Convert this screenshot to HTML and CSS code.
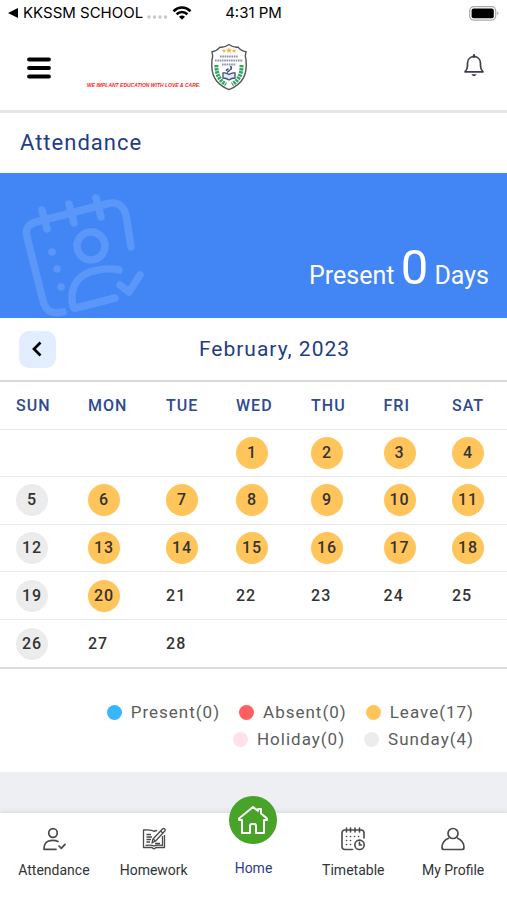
FILE: index.html
```html
<!doctype html>
<html lang="en">
<head>
  <meta charset="utf-8">
  <meta name="viewport" content="width=device-width, initial-scale=1">
  <title>Attendance</title>
  <link rel="stylesheet" href="styles.css">
</head>
<body>

	<div class="status">
		<div class="status-left">
			<svg width="11" height="10" viewBox="0 0 11 10"><path d="M0 5L10 0v10z"/></svg>
			<span class="status-app">KKSSM SCHOOL</span>
			<svg width="21" height="4" viewBox="0 0 21 4" fill="#c8c8c8"><circle cx="2" cy="2" r="1.700"/><circle cx="7.500" cy="2" r="1.700"/><circle cx="13" cy="2" r="1.700"/><circle cx="18.500" cy="2" r="1.700"/></svg>
			<svg width="20" height="14" viewBox="0 0 20 14" fill="none" stroke="#000" stroke-width="2.600"><path d="M1.500 5.200c5-4.900 12-4.900 17 0M4.600 8.300c3.200-3 7.600-3 10.800 0"/><path d="M10 13.800L7 10.800c1.700-1.600 4.300-1.600 6 0z" fill="#000" stroke="none"/></svg>
		</div>
		<div class="status-time">4:31 PM</div>
		<div class="status-right">
			<svg width="30" height="15" viewBox="0 0 30 15"><rect x=".7" y=".7" width="26" height="13.400" rx="4" fill="#fff" stroke="#aaa" stroke-width="1.200"/><rect x="2.600" y="2.600" width="22.200" height="9.600" rx="2" /><path d="M28.300 5.300q2 2 0 4z" fill="#999"/></svg>
		</div>
	</div>

	<header class="header">
		<button class="menu-btn" type="button" aria-label="Menu">
			<svg width="24" height="22" viewBox="0 0 24 22" stroke="#000" stroke-width="3.800" stroke-linecap="round"><path d="M2 2.500h20M2 11h20M2 19.500h20"/></svg>
		</button>
		<div class="brand">
			<span class="tagline">WE IMPLANT EDUCATION WITH LOVE &amp; CARE.</span>
			<svg class="crest" width="38" height="48" viewBox="0 0 38 48">
				<path d="M19 1.500c3 2.200 6 3 9 2.600 2 2.600 4.500 4 8 4.600-1 3-.9 5 0 8 1.500 15-3 24-17 30C5 40.700.5 31.700 2 16.700c.9-3 1-5 0-8 3.500-.6 6-2 8-4.600 3 .4 6-.4 9-2.600z" fill="#fff" stroke="#555" stroke-width="1.400"/>
				<path d="M19 4.300l1 2.200h2l-1.600 1.400.5 2.100-1.900-1.200-1.900 1.200.5-2.100-1.600-1.400h2zM14 6l.8 1.300h1.300l-1 1 .2 1.300-1.300-.7-1.300.7.2-1.300-1-1h1.300zM24 6l.8 1.300h1.300l-1 1 .2 1.300-1.300-.7-1.300.7.2-1.300-1-1h1.300z" fill="#f3b33d"/>
				<path d="M10 13.500h18M5 17.500h28M12 21.500h14" stroke="#8d92ac" stroke-width="2.200" stroke-dasharray="1.600 .7"/>
				<path d="M6.500 22c-.5 9 3 15.500 9.500 19.500M31.500 22c.5 9-3 15.500-9.500 19.500" fill="none" stroke="#35a565" stroke-width="4" stroke-dasharray="2.300 .8"/>
				<path d="M13 30c2-.5 4 0 6 1.500 2-1.500 4-2 6-1.500v5c-2 0-4 .5-6 2-2-1.500-4-2-6-2z" fill="#e4ebf4" stroke="#38507a" stroke-width="1.300"/>
				<path d="M17 29.500l3-2.500M20 23.500a1.500 1.500 0 1 1-.1 3M16.500 28c0-1.500 1-2 2-2" fill="none" stroke="#38507a" stroke-width="1.500"/>
			</svg>
		</div>
		<button class="bell-btn" type="button" aria-label="Notifications">
			<svg width="20" height="23" viewBox="0 0 20 23" fill="none" stroke="#3f3f49" stroke-width="1.700" stroke-linejoin="round"><path d="M1 17.800h18c-1.800-1.700-2.500-3.200-2.500-6V9.300c0-3.900-2.700-6.600-6.500-6.600S3.500 5.400 3.500 9.300v2.500c0 2.800-.7 4.300-2.500 6z"/><path d="M10 2.700V1.200" stroke-width="2.200" stroke-linecap="round"/><path d="M7.300 20.200h5.400q-2.700 4-5.400 0z" fill="#3f3f49" stroke="none"/></svg>
		</button>
	</header>

	<main class="main">
		<h1 class="title">Attendance</h1>

		<section class="banner">
			<svg class="banner-icon" width="126" height="126" viewBox="0 0 126 126" fill="none" stroke="#5a97f9" stroke-width="7.500" stroke-linecap="round" stroke-linejoin="round">
				<path d="M43 120c-12 2.500-17-1-20-11L7 45c-2-8 1-13 9-15l70-18c11-3 17 1 20 11l5 32"/>
				<path d="M22 18l5 19M49 12l5 19M76 6l5 19"/>
				<circle cx="71" cy="54" r="14"/>
				<path d="M99 78c-8-2-20-1-29 2-14 5-21 18-17 34q.5 3 3 2l39-10M100 93l9 7 11-17"/>
				<path d="M32 60h.1M37 77h.1M41 95h.1"/>
			</svg>
			<p class="banner-text">Present <span class="banner-count">0</span> Days</p>
		</section>

		<div class="month">
			<button class="prev" type="button" aria-label="Previous month">
				<svg width="11" height="16" viewBox="0 0 11 16" fill="none" stroke="#000" stroke-width="2.700"><path d="M8.500 1.500L2 8l6.500 6.500"/></svg>
			</button>
			<h2 class="month-name">February, 2023</h2>
		</div>

		<table class="calendar">
			<colgroup>
				<col class="col-sun"><col class="col-mon"><col class="col-tue"><col class="col-wed"><col class="col-thu"><col class="col-fri"><col class="col-sat">
			</colgroup>
			<thead>
				<tr><th>SUN</th><th>MON</th><th>TUE</th><th>WED</th><th>THU</th><th>FRI</th><th>SAT</th></tr>
			</thead>
			<tbody>
				<tr>
					<td></td><td></td><td></td>
					<td><span class="day leave">1</span></td>
					<td><span class="day leave">2</span></td>
					<td><span class="day leave">3</span></td>
					<td><span class="day leave">4</span></td>
				</tr>
				<tr>
					<td><span class="day sunday">5</span></td>
					<td><span class="day leave">6</span></td>
					<td><span class="day leave">7</span></td>
					<td><span class="day leave">8</span></td>
					<td><span class="day leave">9</span></td>
					<td><span class="day leave">10</span></td>
					<td><span class="day leave">11</span></td>
				</tr>
				<tr>
					<td><span class="day sunday">12</span></td>
					<td><span class="day leave">13</span></td>
					<td><span class="day leave">14</span></td>
					<td><span class="day leave">15</span></td>
					<td><span class="day leave">16</span></td>
					<td><span class="day leave">17</span></td>
					<td><span class="day leave">18</span></td>
				</tr>
				<tr>
					<td><span class="day sunday">19</span></td>
					<td><span class="day leave">20</span></td>
					<td>21</td><td>22</td><td>23</td><td>24</td><td>25</td>
				</tr>
				<tr>
					<td><span class="day sunday">26</span></td>
					<td>27</td><td>28</td><td></td><td></td><td></td><td></td>
				</tr>
			</tbody>
		</table>

		<ul class="legend">
			<li><i class="dot present"></i>Present(0)</li>
			<li><i class="dot absent"></i>Absent(0)</li>
			<li><i class="dot leave"></i>Leave(17)</li>
			<li><i class="dot holiday"></i>Holiday(0)</li>
			<li><i class="dot sunday"></i>Sunday(4)</li>
		</ul>
	</main>

	<nav class="tabs">
		<a class="tab" href="#attendance">
			<svg width="24" height="24" viewBox="0 0 24 24" fill="none" stroke="#4a4a4a" stroke-width="1.700" stroke-linecap="round" stroke-linejoin="round"><circle cx="11" cy="6" r="4.300"/><path d="M16 14.500c-2.500-1.200-7-1.300-10-.3-3 1.200-4 3.800-4 8.100h12M17 19l2.300 2.300 3.700-4"/></svg>
			Attendance
		</a>
		<a class="tab" href="#homework">
			<svg width="24" height="24" viewBox="0 0 24 24" fill="none" stroke="#4a4a4a" stroke-width="1.300" stroke-linejoin="round"><path d="M15 3.500c-1.500 0-2.300.3-3 1-1.500-1.500-5-2-10.500-1.500v17.500H10q2 2.500 4 0h8.500V8"/><path d="M3.500 18.300c4-.5 7-.3 8.500.8 1.500-1.100 4.500-1.300 8.500-.8V9M4.500 7.500H9M4.500 10H10M4.500 12.500H9M4.500 15H8M13 16.500h5"/><path d="M10 16l1-4L20.500 2c1.500-1.200 3.500.5 2.300 2L13.500 14z"/><path d="M11 12l2.500 2M18.500 4l2.500 2"/></svg>
			Homework
		</a>
		<a class="tab home" href="#home">
			<span class="home-badge">
				<svg width="32" height="30" viewBox="0 0 32 30" fill="none" stroke="#fff" stroke-width="2" stroke-linecap="round" stroke-linejoin="round"><path d="M5 15H2v-1.500L16 2l5 4V4h3v4.500l6 5V15h-3v13h-8v-7q0-2-2-2h-2q-2 0-2 2v7H5z"/></svg>
			</span>
			Home
		</a>
		<a class="tab" href="#timetable">
			<svg width="24" height="24" viewBox="0 0 24 24" fill="none" stroke="#4a4a4a" stroke-width="1.600" stroke-linecap="round"><path d="M11.500 22.500H4q-3 0-3-3V6q0-3 3-3h16q3 0 3 3v5"/><path d="M5.500 1v4M9.500 1v4M14 1v4M18.500 1v4"/><path d="M5.500 9.500h.1M9.500 9.500h.1M13.500 9.500h.1M17.500 9.500h.1M5.500 13.500h.1M9.500 13.500h.1M5.500 17.500h.1M9.500 17.500h.1"/><circle cx="18.500" cy="17.800" r="4.700"/><path d="M18.500 15.300V18h2"/></svg>
			Timetable
		</a>
		<a class="tab" href="#profile">
			<svg width="24" height="24" viewBox="0 0 24 24" fill="none" stroke="#4a4a4a" stroke-width="1.700" stroke-linejoin="round"><circle cx="12" cy="6.500" r="5"/><path d="M8 11c-5 2-7 5-7 9.500q0 2 2 2h18q2 0 2-2c0-4.500-2-7.500-7-9.500"/></svg>
			My Profile
		</a>
	</nav>

</body>
</html>
```

FILE: styles.css
```css
* {
	box-sizing: border-box;
}
body {
	margin: 0;
	min-height: 100vh;
	display: flex;
	flex-direction: column;
	background: #edeff2;
	color: #333;
	font-family: Roboto, "Liberation Sans", sans-serif;
}
h1, h2, p, ul {
	margin: 0;
	padding: 0;
	font-weight: 400;
}
svg {
	display: block;
	flex: none;
}
button {
	border: 0;
	padding: 0;
	background: none;
	cursor: pointer;
}

/* phone status bar */
.status {
	display: grid;
	grid-template-columns: 1fr auto 1fr;
	align-items: center;
	height: 26px;
	padding: 0 8px;
	background: #fff;
	color: #000;
	font: 15px/26px Inter, sans-serif;
}
.status-left {
	display: flex;
	align-items: center;
	gap: 4px;
	white-space: nowrap;
}
.status-left svg:nth-of-type(2) {
	align-self: flex-end;
	margin-bottom: 7px;
}
.status-right {
	display: flex;
	justify-content: flex-end;
}

.header {
	display: flex;
	align-items: center;
	height: 84px;
	padding: 0 23px 0 27px;
	background: #fff;
}
.bell-btn {
	margin-bottom: 6px;
}
.brand {
	flex: 1;
	display: flex;
	align-items: flex-end;
	gap: 9px;
	padding: 0 0 2px 36px;
}
.tagline {
	color: #f22;
	font: italic bold 5px/12px "Liberation Sans", sans-serif;
	white-space: nowrap;
}

.main {
	background: #fff;
	border-top: 3px solid #e6e6e6;
}
.title {
	padding: 0 20px;
	color: #1f3c88;
	font-size: 22px;
	line-height: 60px;
	letter-spacing: 1px;
}

.banner {
	display: flex;
	align-items: flex-end;
	justify-content: space-between;
	height: 145px;
	padding: 0 18px 0 20px;
	background: #4285f5;
	color: #fff;
}
.banner-text {
	padding-bottom: 14px;
	font-size: 25px;
	line-height: 56px;
}
.banner-count {
	font-size: 49px;
}

.month {
	display: grid;
	grid-template-columns: 37px 1fr;
	align-items: center;
	height: 62px;
	padding: 0 14px 0 19px;
}
.prev {
	display: flex;
	align-items: center;
	justify-content: center;
	height: 37px;
	border-radius: 10px;
	background: #e2edff;
}
.month-name {
	color: #1f3c88;
	font-size: 21px;
	letter-spacing: 1px;
	text-align: center;
}

.calendar {
	width: 100%;
	height: 289px;
	table-layout: fixed;
	border-collapse: collapse;
	border-top: 2px solid #d5d8dc;
	border-bottom: 2px solid #dcdcdc;
	font-size: 16px;
	font-weight: 500;
	letter-spacing: 1px;
}
.col-sun { width: 14.2%; }
.col-mon { width: 15.4%; }
.col-tue { width: 13.8%; }
.col-wed { width: 14.8%; }
.col-thu { width: 14.3%; }
.col-fri { width: 13.5%; }
.col-sat { width: 14%; }
.calendar th,
.calendar td {
	padding: 0 0 0 16px;
	border-bottom: 1px solid #e4e6e9;
	text-align: left;
}
.calendar th {
	height: 48px;
	color: #304a8f;
	font-weight: 500;
}
.day {
	display: block;
	width: 32px;
	height: 32px;
	border-radius: 50%;
	line-height: 32px;
	text-align: center;
}

.legend {
	display: flex;
	flex-wrap: wrap;
	justify-content: flex-end;
	column-gap: 19px;
	padding: 30px 33px 19px 80px;
	color: #5c5c5c;
	font-size: 17px;
	line-height: 27px;
	letter-spacing: 1px;
	list-style: none;
}
.legend li {
	display: flex;
	align-items: center;
	gap: 9px;
}
.dot {
	width: 15px;
	height: 15px;
	border-radius: 50%;
}
.present { background: #38b6ff; }
.absent { background: #ff5f5f; }
.leave { background: #ffc55a; }
.holiday { background: #ffe0e8; }
.sunday { background: #ececec; }

.tabs {
	display: grid;
	grid-template-columns: repeat(5, 1fr);
	height: 87px;
	margin-top: auto;
	padding: 0 4px;
	background: #fff;
	box-shadow: 0 -2px 4px #dcdfe1;
}
.tab {
	display: flex;
	flex-direction: column;
	align-items: center;
	gap: 9px;
	padding-top: 14px;
	color: #333;
	font-size: 14px;
	line-height: 20px;
	text-decoration: none;
}
.home {
	gap: 14px;
	padding-top: 0;
	color: #2b3c91;
}
/* sticks out above the tab bar */
.home-badge {
	display: flex;
	align-items: center;
	justify-content: center;
	width: 48px;
	height: 48px;
	margin-top: -17px;
	border-radius: 50%;
	background: #48a329;
}
```
